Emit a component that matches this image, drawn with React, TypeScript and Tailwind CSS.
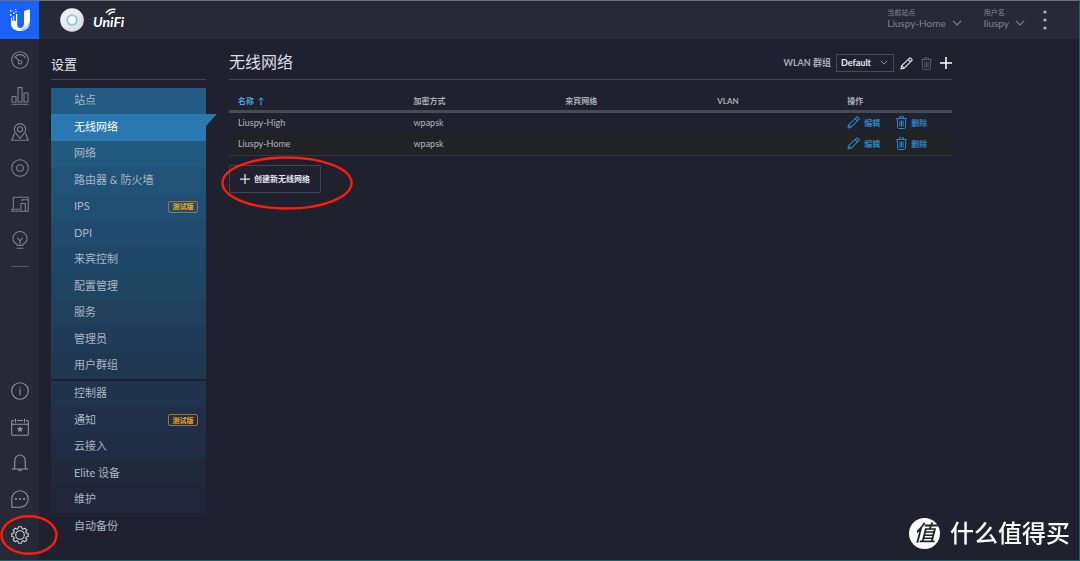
import type { ReactNode } from "react";

function Icon({ children, className = "size-[18px]" }: { children: ReactNode; className?: string }) {
  return (
    <svg
      viewBox="0 0 18 18"
      className={className}
      fill="none"
      stroke="currentColor"
      strokeWidth="1.1"
      strokeLinecap="round"
      strokeLinejoin="round"
      aria-hidden="true"
    >
      {children}
    </svg>
  );
}

const topNav = [
  {
    label: "Dashboard",
    icon: (
      <>
        <circle cx="9" cy="9" r="8.3" />
        <path d="M3.800 6.800C5.600 2.600 12.400 2.600 14.200 6.800M5 6.400l2.800 3.500" />
        <circle cx="9" cy="11.200" r="1.700" />
      </>
    ),
  },
  {
    label: "Statistics",
    icon: (
      <>
        <path d="M1 17.300h16" />
        <rect x="1" y="9.500" width="4" height="5.500" />
        <rect x="7" y="0.600" width="4" height="14.400" />
        <rect x="13" y="6" width="4" height="9" />
      </>
    ),
  },
  {
    label: "Map",
    icon: (
      <>
        <path d="M9 15.500C6 11.800 3.300 9.200 3.300 6.300a5.700 5.700 0 0 1 11.400 0c0 2.900-2.700 5.500-5.700 9.200z" />
        <circle cx="9" cy="6.300" r="2.600" />
        <path d="M3.400 10.500.7 17.300h16.600l-2.700-6.800" />
      </>
    ),
  },
  {
    label: "Devices",
    icon: (
      <>
        <circle cx="9" cy="9" r="8.3" />
        <circle cx="9" cy="9" r="3.300" />
      </>
    ),
  },
  {
    label: "Clients",
    icon: (
      <>
        <path d="M8.500 14.300H.8v1.900h8M2.300 14V2.200h14.900v1.600" />
        <path d="M11 6V4.800h6.200v11.400H15" />
        <rect x="10" y="8.500" width="4.300" height="7.700" />
      </>
    ),
  },
  {
    label: "Insights",
    icon: (
      <path d="M6.200 14.500v-1.300C3.700 12.200 2 10.200 2 7.500a7 7 0 0 1 14 0c0 2.700-1.700 4.700-4.200 5.700v1.300zM6 17.300h6M9 14.500V9.800M6.600 7.200 9 9.800l2.400-2.600" />
    ),
  },
];

const bottomNav = [
  {
    label: "Info",
    icon: (
      <>
        <circle cx="9" cy="9" r="8.3" />
        <path d="M9 7.600v5.200M9 5.200v.4" />
      </>
    ),
  },
  {
    label: "Events",
    icon: (
      <>
        <path d="M2.500 2.500h-.8a1 1 0 0 0-1 1v12.800a1 1 0 0 0 1 1h14.600a1 1 0 0 0 1-1V3.500a1 1 0 0 0-1-1h-.8M6.500 2.500h5M.7 6.300h16.600M4.500 1v3M13.500 1v3" />
        <path
          d="m9 8 .9 2.100 2.300.2-1.700 1.500.5 2.300L9 12.900l-2 1.200.5-2.300-1.700-1.500 2.300-.2z"
          fill="currentColor"
          stroke="none"
        />
      </>
    ),
  },
  {
    label: "Alerts",
    icon: (
      <path d="M1.200 15h15.600M3 15c.7-.8.8-2 .8-3.500V6.200a5.200 5.200 0 0 1 10.400 0v5.300c0 1.500.1 2.700.8 3.500M7.500 15.300c.2 2 2.800 2 3 0" />
    ),
  },
  {
    label: "Chat",
    icon: (
      <>
        <path d="M.8 17.200V9A8.200 8.200 0 1 1 9 17.200z" />
        <path d="M5 9h.02M9 9h.02M13 9h.02" strokeWidth="2" />
      </>
    ),
  },
];

type Item = { label: string; tone: string; active?: boolean; beta?: boolean };

const siteItems: Item[] = [
  { label: "站点", tone: "bg-[#225b84]" },
  { label: "无线网络", tone: "bg-[#2978b0]", active: true },
  { label: "网络", tone: "bg-[#22597f]" },
  { label: "路由器 & 防火墙", tone: "bg-[#215379]" },
  { label: "IPS", tone: "bg-[#214f74]", beta: true },
  { label: "DPI", tone: "bg-[#214b6d]" },
  { label: "来宾控制", tone: "bg-[#204768]" },
  { label: "配置管理", tone: "bg-[#204560]" },
  { label: "服务", tone: "bg-[#20405b]" },
  { label: "管理员", tone: "bg-[#203b57]" },
  { label: "用户群组", tone: "bg-[#1f384f]" },
];

const controllerItems: Item[] = [
  { label: "控制器", tone: "bg-[#1f334c]" },
  { label: "通知", tone: "bg-[#202f47]", beta: true },
  { label: "云接入", tone: "bg-[#202c43]" },
  { label: "Elite 设备", tone: "bg-[#212939]" },
  { label: "维护", tone: "bg-[#222438]" },
  { label: "自动备份", tone: "bg-transparent" },
];

function MenuList({ items }: { items: Item[] }) {
  return (
    <ul>
      {items.map((item) => (
        <li key={item.label} className={`h-[26px] even:h-[27px] ${item.tone}`}>
          <a
            href="#"
            aria-current={item.active ? "page" : undefined}
            className={`relative flex h-full items-center justify-between pr-2 pb-px pl-[23px] text-[11px] ${
              item.active ? "text-white" : "text-[#a9b6c3]"
            }`}
          >
            {item.label}
            {item.beta && (
              <span className="flex h-3 w-[30px] items-center justify-center rounded-xs border border-[#94783a] text-[7px] font-bold text-[#f0a91d]">
                测试版
              </span>
            )}
            {item.active && (
              <svg viewBox="0 0 11 12" className="absolute top-0 left-full h-3 w-[11px]" fill="#2978b0" aria-hidden="true">
                <path d="M0 0h11L0 12z" />
              </svg>
            )}
          </a>
        </li>
      ))}
    </ul>
  );
}

function Chevron({ className }: { className?: string }) {
  return (
    <svg viewBox="0 0 10 6" className={className} fill="none" stroke="currentColor" strokeWidth="1.1" aria-hidden="true">
      <path d="M1 .8 5 5 9 .8" />
    </svg>
  );
}

function Pencil() {
  return (
    <svg viewBox="0 0 13 13" className="size-[13px]" fill="none" stroke="currentColor" strokeWidth="1.100" strokeLinejoin="round" aria-hidden="true">
      <path d="M1 12l.7-3.300L9.400 1.300a1 1 0 0 1 1.400 0l.9.9a1 1 0 0 1 0 1.400L4.200 11.200zM8.200 2.500l2.300 2.300M1.800 8.900l2.200 2.200" />
    </svg>
  );
}

function Trash() {
  return (
    <svg viewBox="0 0 11 13" className="h-[13px] w-[11px]" fill="none" stroke="currentColor" strokeWidth="1" strokeLinejoin="round" aria-hidden="true">
      <path d="M.3 2.500h10.400M3.500 2.300V.7h4v1.600M1.200 2.700l.5 9.100q0 .7.700.7h6.200q.7 0 .7-.7l.5-9.100M3.900 4.600v6M5.500 4.600v6M7.100 4.600v6" />
    </svg>
  );
}

function Plus({ className }: { className?: string }) {
  return (
    <svg viewBox="0 0 12 12" className={className} fill="none" stroke="currentColor" strokeWidth="1.500" aria-hidden="true">
      <path d="M6 0v12M0 6h12" />
    </svg>
  );
}

const networks = [
  { name: "Liuspy-High", security: "wpapsk" },
  { name: "Liuspy-Home", security: "wpapsk" },
];

function HeaderMenu({ label, value }: { label: string; value: string }) {
  return (
    <button type="button" className="flex flex-col text-left">
      <span className="text-[7px] leading-[10px] text-[#858791]">{label}</span>
      <span className="flex items-center gap-1.5 text-[10px] leading-3 text-[#80828d]">
        {value}
        <Chevron className="h-1.5 w-2.5" />
      </span>
    </button>
  );
}

export default function App() {
  return (
    <div className="flex min-h-screen flex-col border-t border-r border-b border-t-[#6b6c75] border-r-[#17656b] border-b-[#17656b] bg-[#20212f] font-['Lato','Noto_Sans_CJK_SC',sans-serif] text-[#b4b6bd]">
      <header className="flex h-[38px] shrink-0 items-center bg-[#282936]">
        <a href="#" aria-label="Ubiquiti" className="flex h-full w-[39px] items-center justify-center bg-[#1b62fb]">
          <svg viewBox="0 0 22 24" className="h-6 w-[22px]" fill="white" aria-hidden="true">
            <path d="M15 3.500Q16 2 21 1.500v12C21 19.500 17 23 11 23c-4.600 0-8-2.200-9-6V9.500h1v3h1.200V8h1v5H7V6h1.200v10.500c0 2.300 1 3.500 3 3.500 2.600 0 3.800-2 3.800-5z" />
            <path d="M1 2h1.500v1.500H1zM4 4.500h1.500V6H4zM6.200 1h1v1h-1zM1.200 6h1.200v2H1.200zM6.500 3h1v1.500h-1z" />
            <path d="M20.500 14c-.6 4-3.800 6.800-8 7.700" fill="none" stroke="#1b62fb" strokeWidth=".6" />
          </svg>
        </a>
        <svg viewBox="0 0 24 24" className="ml-[21px] size-6" aria-hidden="true">
          <defs>
            <linearGradient id="puck" x1="0" y1="0" x2="1" y2="1">
              <stop offset="0" stopColor="#fafafa" />
              <stop offset="1" stopColor="#d5d7db" />
            </linearGradient>
          </defs>
          <circle cx="12" cy="12" r="11.800" fill="url(#puck)" />
          <circle cx="12" cy="12" r="4.800" fill="#f4f7fb" stroke="#7fbdf2" strokeWidth="1.500" />
        </svg>
        <div className="relative ml-[9px] pt-1 text-[14px] leading-5 font-bold text-white italic">
          UniFi
          <svg viewBox="0 0 12 8" className="absolute top-0 left-3 h-2 w-3" fill="none" stroke="white" strokeWidth="1.300" aria-hidden="true">
            <path d="M1 5Q4.500.2 10.500 1.500M3.500 7Q6 3.300 10 4.200" />
          </svg>
        </div>
        <div className="ml-auto flex items-center gap-[22px] pr-8 pb-1">
          <HeaderMenu label="当前站点" value="Liuspy-Home" />
          <HeaderMenu label="用户名" value="liuspy" />
          <button type="button" aria-label="More" className="-ml-1 pt-1 text-[#b4b6bd]">
            <svg viewBox="0 0 4 20" className="h-5 w-1" fill="currentColor" aria-hidden="true">
              <circle cx="2" cy="2" r="1.600" />
              <circle cx="2" cy="10" r="1.600" />
              <circle cx="2" cy="18" r="1.600" />
            </svg>
          </button>
        </div>
      </header>

      <div className="flex grow">
        <nav className="flex w-[39px] shrink-0 flex-col items-center bg-[#282936] pt-[3px] pb-[7px] text-[#7d7f8a]">
          {topNav.map((n) => (
            <a key={n.label} href="#" aria-label={n.label} className="flex h-9 items-center">
              <Icon>{n.icon}</Icon>
            </a>
          ))}
          <hr className="mt-2 w-[18px] border-[#555762]" />
          <div className="mt-auto flex flex-col items-center text-[#92949e]">
            {bottomNav.map((n) => (
              <a key={n.label} href="#" aria-label={n.label} className="flex h-9 items-center">
                <Icon>{n.icon}</Icon>
              </a>
            ))}
            <a href="#" aria-label="Settings" className="relative flex h-9 items-center text-[#d0d2d8]">
              <Icon>
                <circle cx="9" cy="9" r="4.300" />
                <path d="M7.500.8h3l.5 1.900 1.100.5 1.700-1 2 2-1 1.700.5 1.100 1.900.5v3l-1.900.5-.5 1.100 1 1.700-2 2-1.700-1-1.100.5-.5 1.900h-3L7 15.300l-1.100-.5-1.700 1-2-2 1-1.700-.5-1.100-1.900-.5v-3L2.700 7l.5-1.100-1-1.700 2-2 1.700 1L7 2.700z" />
              </Icon>
              <svg viewBox="0 0 58 40" className="pointer-events-none absolute top-[-2px] left-[-11px] h-10 w-[58px] max-w-none" fill="none" stroke="#fb1d10" strokeWidth="2.400" aria-hidden="true">
                <ellipse cx="29" cy="20" rx="27.500" ry="18.800" />
              </svg>
            </a>
          </div>
        </nav>

        <aside className="ml-3 w-[155px] shrink-0">
          <h2 className="flex h-[41px] items-center border-b border-[#42454f] pt-3 text-[13px] text-[#e6e7ea]">设置</h2>
          <div className="mt-2">
            <MenuList items={siteItems} />
            <div className="h-0.5 bg-[#1c2130]" />
            <MenuList items={controllerItems} />
          </div>
        </aside>

        <main className="ml-[23px] max-w-[723px] grow">
          <div className="flex h-[41px] items-center border-b border-[#42454f] pt-1.5">
            <h1 className="text-[16px] text-[#dcdde1]">无线网络</h1>
            <div className="ml-auto flex items-center pt-0.5">
              <label htmlFor="wlan" className="text-[9px] font-bold text-[#a9abb3]">
                WLAN 群组
              </label>
              <div className="relative ml-[5px] text-[#9a9ca5]">
                <select id="wlan" className="block h-[18px] w-[58px] appearance-none border border-[#484b54] pl-1 text-[9px] font-bold text-[#e9eaed]">
                  <option>Default</option>
                </select>
                <Chevron className="pointer-events-none absolute top-1.5 right-1.5 h-[5px] w-2" />
              </div>
              <button type="button" aria-label="编辑群组" className="ml-[6px] text-[#e6e7ea]">
                <Pencil />
              </button>
              <button type="button" aria-label="删除群组" className="ml-2 text-[#555862]">
                <Trash />
              </button>
              <button type="button" aria-label="添加群组" className="ml-2 text-white">
                <Plus className="size-3" />
              </button>
            </div>
          </div>

          <table className="mt-[13px] w-full table-fixed text-left">
            <thead className="text-[8px] leading-3 text-[#a9abb3]">
              <tr className="h-[18px] border-b-3 border-[#494b52]">
                <th className="w-[24%] pl-[9px] text-[#4ea3e0]">
                  <span className="flex items-center gap-1">
                    名称
                    <svg viewBox="0 0 6 8" className="h-2 w-1.5" fill="none" stroke="currentColor" strokeWidth="1" aria-hidden="true">
                      <path d="M3 8V.8M.6 3.200 3 .8l2.400 2.400" />
                    </svg>
                  </span>
                </th>
                <th className="w-[21%] pl-[11px]">加密方式</th>
                <th className="w-[21%] pl-[11px]">来宾网络</th>
                <th className="w-[18%] pl-[11px]">VLAN</th>
                <th className="pl-[11px]">操作</th>
              </tr>
            </thead>
            <tbody className="text-[9px] leading-3">
              {networks.map((n) => (
                <tr key={n.name} className="h-[22px] even:border-b even:border-[#34363d] even:bg-[#212224]">
                  <td className="pl-[9px]">{n.name}</td>
                  <td className="pl-[11px]">{n.security}</td>
                  <td />
                  <td />
                  <td className="pl-[11px]">
                    <div className="flex items-center gap-4 text-[8px] font-bold text-[#2f83c2]">
                      <button type="button" className="flex items-center gap-1">
                        <Pencil />
                        编辑
                      </button>
                      <button type="button" className="flex items-center gap-1">
                        <Trash />
                        删除
                      </button>
                    </div>
                  </td>
                </tr>
              ))}
            </tbody>
          </table>

          <div className="relative mt-[9px] inline-block">
            <button type="button" className="flex h-7 items-center gap-1 rounded-xs border border-[#41464e] px-2.5 text-[8px] font-bold text-[#e3e4e8]">
              <Plus className="size-2.5" />
              创建新无线网络
            </button>
            <svg viewBox="0 0 132 54" className="pointer-events-none absolute top-[-9px] left-[-8px] h-[54px] w-[132px] max-w-none" fill="none" stroke="#fb1d10" strokeWidth="2.400" aria-hidden="true">
              <ellipse cx="66" cy="27" rx="64.500" ry="25.500" />
            </svg>
          </div>
        </main>
      </div>

      <div className="fixed right-[10px] bottom-[12px] flex items-center gap-2.5 text-white">
        <span className="flex size-[31px] items-center justify-center rounded-full bg-white text-[22px] leading-none font-medium text-[#20212f] italic">值</span>
        <span className="text-[24px] leading-8 font-medium">什么值得买</span>
      </div>
    </div>
  );
}
